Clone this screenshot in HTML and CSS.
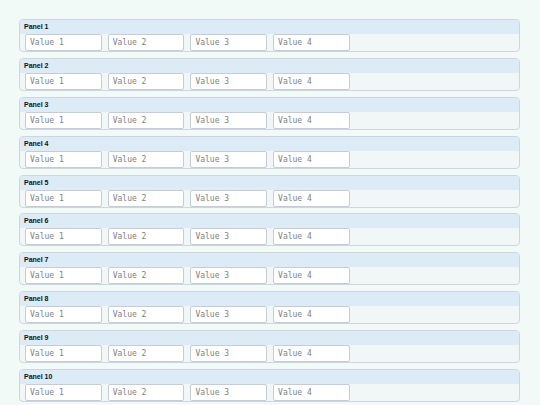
FILE: index.html
```html
<!DOCTYPE html>
<html>
<head>
<meta charset="utf-8">
<link rel="stylesheet" href="styles.css">
</head>
<body>
<div class="list">
  <section class="panel"><div class="panel-head">Panel 1</div><div class="panel-body"><input class="field" placeholder="Value 1"><input class="field" placeholder="Value 2"><input class="field" placeholder="Value 3"><input class="field" placeholder="Value 4"></div></section>
  <section class="panel"><div class="panel-head">Panel 2</div><div class="panel-body"><input class="field" placeholder="Value 1"><input class="field" placeholder="Value 2"><input class="field" placeholder="Value 3"><input class="field" placeholder="Value 4"></div></section>
  <section class="panel"><div class="panel-head">Panel 3</div><div class="panel-body"><input class="field" placeholder="Value 1"><input class="field" placeholder="Value 2"><input class="field" placeholder="Value 3"><input class="field" placeholder="Value 4"></div></section>
  <section class="panel"><div class="panel-head">Panel 4</div><div class="panel-body"><input class="field" placeholder="Value 1"><input class="field" placeholder="Value 2"><input class="field" placeholder="Value 3"><input class="field" placeholder="Value 4"></div></section>
  <section class="panel"><div class="panel-head">Panel 5</div><div class="panel-body"><input class="field" placeholder="Value 1"><input class="field" placeholder="Value 2"><input class="field" placeholder="Value 3"><input class="field" placeholder="Value 4"></div></section>
  <section class="panel"><div class="panel-head">Panel 6</div><div class="panel-body"><input class="field" placeholder="Value 1"><input class="field" placeholder="Value 2"><input class="field" placeholder="Value 3"><input class="field" placeholder="Value 4"></div></section>
  <section class="panel"><div class="panel-head">Panel 7</div><div class="panel-body"><input class="field" placeholder="Value 1"><input class="field" placeholder="Value 2"><input class="field" placeholder="Value 3"><input class="field" placeholder="Value 4"></div></section>
  <section class="panel"><div class="panel-head">Panel 8</div><div class="panel-body"><input class="field" placeholder="Value 1"><input class="field" placeholder="Value 2"><input class="field" placeholder="Value 3"><input class="field" placeholder="Value 4"></div></section>
  <section class="panel"><div class="panel-head">Panel 9</div><div class="panel-body"><input class="field" placeholder="Value 1"><input class="field" placeholder="Value 2"><input class="field" placeholder="Value 3"><input class="field" placeholder="Value 4"></div></section>
  <section class="panel"><div class="panel-head">Panel 10</div><div class="panel-body"><input class="field" placeholder="Value 1"><input class="field" placeholder="Value 2"><input class="field" placeholder="Value 3"><input class="field" placeholder="Value 4"></div></section>
</div>
</body>
</html>
```
FILE: styles.css
```css
html, body {
  margin: 0;
  padding: 0;
  background: #f2faf8;
}
body {
  padding: 19px 20px 0 19px;
  font-family: "Liberation Sans", Arial, sans-serif;
}
.list {
  display: flex;
  flex-direction: column;
  gap: 5.9px;
  width: 501px;
}
.panel {
  border: 1px solid #cdd6e0;
  border-radius: 4px;
  background: #f1f7f7;
  overflow: hidden;
}
.panel-head {
  height: 14px;
  line-height: 13px;
  background: #dcebf5;
  font-size: 7px;
  font-weight: bold;
  color: #111;
  padding-left: 4px;
}
.panel-body {
  display: flex;
  gap: 6px;
  padding: 0 5px;
  height: 17px;
}
.field {
  box-sizing: border-box;
  width: 76.7px;
  height: 17px;
  margin: 0;
  padding: 0 4px;
  border: 1px solid #c6ccd3;
  border-radius: 2px;
  background: #fff;
  font-family: "DejaVu Sans Mono", "Liberation Mono", monospace;
  font-size: 8px;
  color: #333;
  outline: none;
}
.field::placeholder {
  color: #808080;
}
```
